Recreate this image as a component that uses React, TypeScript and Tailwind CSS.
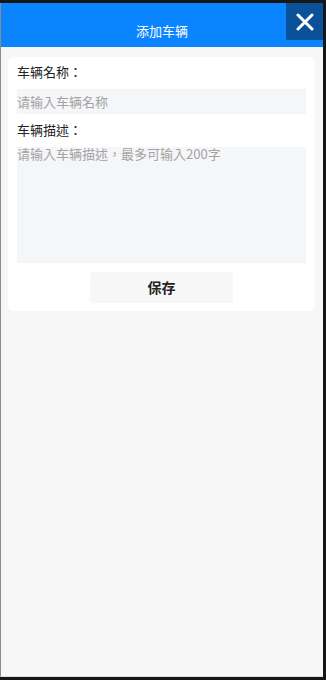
import { useState } from 'react';

const font = { fontFamily: '"Noto Sans CJK TC", "Noto Sans CJK SC", "Noto Sans", sans-serif' };

export default function App() {
  const [name, setName] = useState('');
  const [desc, setDesc] = useState('');

  return (
    <div className="w-[326px] h-[680px] bg-[#161616] pt-[3px] pr-[3px] pb-[3px]" style={font}>
      <div className="h-full flex flex-col bg-[#f7f7f7] border-l border-[#8c8c8c] border-b border-b-[#dcdcdc]">
        {/* Header */}
        <div className="relative h-[44px] shrink-0 bg-[#0a84ff] flex items-center justify-center pt-[12px]">
          <span className="text-[13px] leading-[18px] text-white">添加车辆</span>
          <button className="absolute top-0 right-0 w-[37px] h-[37px] bg-[#0b5199] flex items-center justify-center">
            <svg width="18" height="18" viewBox="0 0 18 18" fill="none">
              <path d="M2 2L16 16M16 2L2 16" stroke="white" strokeWidth="3" strokeLinecap="round" />
            </svg>
          </button>
        </div>

        {/* Form card */}
        <div className="mt-[10px] ml-[7px] mr-[8px] bg-white rounded-md px-[9px] pt-[6px] pb-[8px] flex flex-col">
          <label className="text-[13px] leading-[18px] text-[#222]">车辆名称：</label>
          <input
            value={name}
            onChange={(e) => setName(e.target.value)}
            placeholder="请输入车辆名称"
            className="mt-[8px] h-[25px] w-full bg-[#f5f6f8] text-[13px] text-[#333] placeholder:text-[#a3a3a3] outline-none"
          />
          <label className="mt-[7px] text-[13px] leading-[18px] text-[#222]">车辆描述：</label>
          <textarea
            value={desc}
            onChange={(e) => setDesc(e.target.value)}
            placeholder="请输入车辆描述，最多可输入200字"
            maxLength={200}
            className="mt-[8px] h-[116px] w-full resize-none bg-[#f5f6f8] text-[13px] leading-[13px] text-[#333] placeholder:text-[#a3a3a3] outline-none"
          />
          <div className="mt-[9px] flex justify-center">
            <button className="w-[143px] h-[31px] rounded-sm bg-[#f7f7f7] text-[14px] font-bold text-[#222]">
              保存
            </button>
          </div>
        </div>
      </div>
    </div>
  );
}
